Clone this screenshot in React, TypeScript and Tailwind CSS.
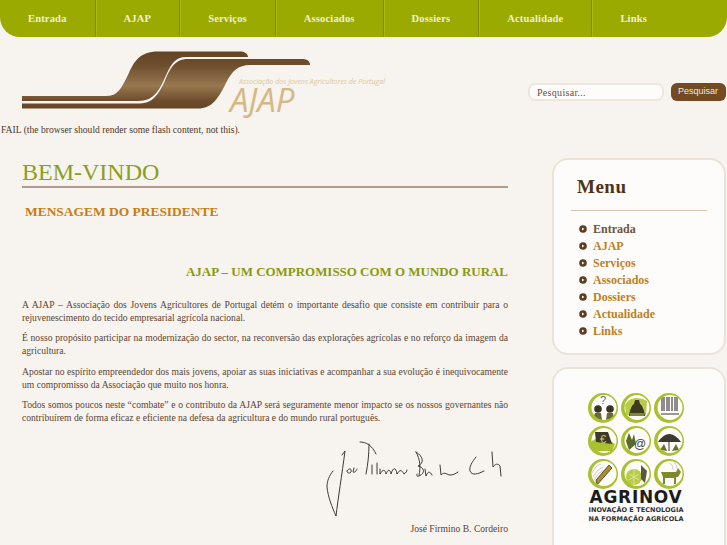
const navItems = ["Entrada", "AJAP", "Serviços", "Associados", "Dossiers", "Actualidade", "Links"];

function Logo() {
  return (
    <div className="relative h-[70px] w-[400px]">
      <svg width="320" height="70" viewBox="0 0 320 70" className="absolute left-0 top-0">
        <defs>
          <linearGradient id="band" gradientUnits="userSpaceOnUse" x1="0" y1="0" x2="0" y2="58">
            <stop offset="0" stopColor="#644426" />
            <stop offset="0.25" stopColor="#6f4e2e" />
            <stop offset="0.6" stopColor="#97784f" />
            <stop offset="0.85" stopColor="#6f4e2e" />
            <stop offset="1" stopColor="#644426" />
          </linearGradient>
        </defs>
        <path
          d="M22 45 H107 C118 45 122 36 128 24 C134 10 140 0.5 158 0.5 H240 C245 0.5 248 3 248 6 H186 C176 6 172 12 167 22 C160 38 155 50 138 50 H22 Z"
          fill="url(#band)"
        />
        <path
          d="M22 52.5 H140 C152 52.5 158 44 164 32 C170 18 174 8 188 8 H302 C307 8 310 10 310 14 H250 C238 14 232 20 226 32 C218 48 212 57.5 198 57.5 H22 Z"
          fill="url(#band)"
        />
      </svg>
      <span className="absolute left-[239px] top-[25.5px] whitespace-nowrap font-['Open_Sans',sans-serif] text-[7.1px] italic leading-[9px] text-[#dcc9a0]">
        Associação dos Jovens Agricultores de Portugal
      </span>
      <span className="absolute left-[230px] top-[34.5px] font-['Open_Sans',sans-serif] text-[33px] italic leading-[28px] text-[#d4b985]">
        AJAP
      </span>
    </div>
  );
}

function Signature() {
  return (
    <svg width="190" height="80" viewBox="18 11 190 80" fill="none" stroke="#3f3a34" strokeWidth="1" strokeLinecap="round" strokeLinejoin="round">
      <path d="M33 42 C29 47 27 52 27 58 C28 68 32 78 36 87 C38 70 42 45 45 22 L42 26" />
      <path d="M47 42 C49 39 52 39 51 43 C49 45 47 44 47 42 M54 39 L53 43 C55 44 56 42 57 40" />
      <path d="M60 13 C66 13 72 16 76 25 M69 15 C69 25 68 35 66 45" />
      <path d="M72 36 L72 45 M77 34 L77 45 M80 40 L80 45 C83 40 85 40 86 45 C88 40 90 40 91 45 C93 38 96 38 97 45 C100 40 102 41 104 45 C106 44 107 42 107 41" />
      <path d="M116 23 C120 30 121 38 119 46 M116 23 C124 28 124 34 118 37 C124 38 126 44 119 47 C117 48 116 46 117 45" />
      <path d="M125 40 L126 47 C128 42 130 42 132 46 M140 36 L141 46 C145 42 147 46 150 46 C153 46 155 45 158 43" />
      <path d="M176 28 C172 33 169 38 170 42 C172 47 178 45 184 42" />
      <path d="M192 23 L193 38 C195 35 198 34 200 37 L201 47" />
    </svg>
  );
}

function AgrinovBadge({ children }: { children?: React.ReactNode }) {
  return (
    <svg width="30" height="30" viewBox="0 0 30 30">
      {children}
      <path
        d="M15 0 A15 15 0 1 0 15 30 A15 15 0 1 0 15 0 Z M16 2 A12.5 12.5 0 1 1 16 27 A12.5 12.5 0 1 1 16 2 Z"
        fillRule="evenodd"
        fill="#a9c02f"
      />
    </svg>
  );
}

function Agrinov() {
  return (
    <div className="flex flex-col items-center">
      <div className="grid grid-cols-3 gap-[3px]">
        <AgrinovBadge>
          <circle cx="10" cy="16" r="3.8" fill="#3a3422" />
          <circle cx="22" cy="16" r="3.8" fill="#3a3422" />
          <path d="M5 26 L7 20 H13 L14 27 Z M18 27 L19 20 H25 L26 25 Z" fill="#6b6a32" />
          <text x="12" y="11" fontSize="11" fill="#666" fontFamily="Liberation Sans, sans-serif">?</text>
        </AgrinovBadge>
        <AgrinovBadge>
          <path d="M4 12 C8 4 18 3 26 8 L25 22 L5 22 Z" fill="#b9cc48" />
          <path d="M8 23 C9 16 11 12 13 11 L14 7 L18 7 L19 11 C21 12 23 16 24 23 Z" fill="#3f3a22" />
          <path d="M9 20 H23 V23 H9 Z" fill="#7d8a2a" />
        </AgrinovBadge>
        <AgrinovBadge>
          <path d="M8 4 V18 M10 4 V18 M13 4 V18 M15 4 V18 M18 4 V18 M21 4 V18 M23 4 V18" stroke="#444" strokeWidth="1.2" />
          <path d="M7 21 H25" stroke="#777" strokeWidth="1.5" />
        </AgrinovBadge>
        <AgrinovBadge>
          <path d="M3 16 C8 10 20 12 27 18 L24 25 L6 25 Z" fill="#a9c02f" />
          <path d="M7 6 H20 L24 18 L8 16 Z" fill="#3f3a22" />
          <text x="12" y="17" fontSize="11" fill="#c4d66a" fontFamily="Liberation Sans, sans-serif">€</text>
        </AgrinovBadge>
        <AgrinovBadge>
          <path d="M5 15 L8 7 L11 14 L13 8 L15 18 L8 24 Z" fill="#5a6a2a" />
          <text x="13" y="22" fontSize="12" fill="#444" fontFamily="Liberation Sans, sans-serif">@</text>
        </AgrinovBadge>
        <AgrinovBadge>
          <path d="M4 16 Q15 0 27 16 Z" fill="#3a3a30" />
          <path d="M15 15 V25" stroke="#3a3a30" strokeWidth="1" />
          <path d="M6 24 L10 18 L13 25 Z M18 25 L22 18 L25 24 Z" fill="#6a6a3a" />
        </AgrinovBadge>
        <AgrinovBadge>
          <path d="M9 26 L8 21 L21 6 L24 9 Z" fill="#a78f2c" stroke="#3f3a22" strokeWidth="0.8" />
          <path d="M4 14 Q7 7 13 5 M5 18 Q9 10 15 8 M6 21 Q10 13 16 11" fill="none" stroke="#aaa" strokeWidth="0.6" />
        </AgrinovBadge>
        <AgrinovBadge>
          <circle cx="13" cy="18" r="8" fill="#b9cc48" />
          <path d="M8 15 L18 21 M8 21 L18 15 M13 10 V26" stroke="#dfe8a8" strokeWidth="0.8" />
          <path d="M20 6 L26 12 L24 24 L20 20 Z" fill="#5a5a3a" />
        </AgrinovBadge>
        <AgrinovBadge>
          <path d="M7 13 L22 13 L24 9 L27 13 L24 18 L22 18 L22 25 L20 25 L20 19 L11 19 L11 25 L9 25 L9 18 Z" fill="#7c8a2c" />
          <path d="M16 4 Q20 7 19 11 M20 3 Q24 7 23 10" fill="none" stroke="#aaa" strokeWidth="0.6" />
        </AgrinovBadge>
      </div>
      <p className="font-['DejaVu_Sans',sans-serif] text-[17px] font-bold leading-[16px] tracking-[0.7px] text-[#1c1c1c]">AGRINOV</p>
      <p className="mt-[1px] whitespace-nowrap text-center font-['DejaVu_Sans',sans-serif] text-[6.5px] font-bold leading-[9px] tracking-[0.05px] text-[#333]">
        INOVAÇÃO E TECNOLOGIA
        <br />
        NA FORMAÇÃO AGRÍCOLA
      </p>
    </div>
  );
}

export default function App() {
  return (
    <div className="h-[545px] w-[727px] overflow-hidden bg-[#f7f3ee] font-['Liberation_Serif',serif] text-[#5b4533]">
      <nav className="flex h-[37px] rounded-b-[20px] bg-[#9aaa00]">
        {navItems.map((item, index) => (
          <a
            key={item}
            className={`flex items-center px-7 text-[10.56px] font-bold tracking-[0.15px] text-[#f4efcf] ${
              index < navItems.length - 1 ? "border-r border-[#7f8f00] shadow-[1px_0_0_#a8b71a]" : ""
            }`}
          >
            {item}
          </a>
        ))}
      </nav>

      <header className="flex h-[80px] items-start justify-between pt-[14px]">
        <Logo />
        <form className="mt-[32px] mr-[1.5px] flex items-center gap-[6.5px]">
          <input
            readOnly
            value="Pesquisar..."
            className="h-[18px] w-[136px] rounded-[7px] border-2 border-[#eee6db] bg-[#fdfcfa] px-[7px] font-['Liberation_Serif',serif] text-[10px] tracking-[0.3px] text-[#6b4f35] outline-none"
          />
          <button type="button" className="h-[18px] w-[55px] rounded-[6px] bg-[#744a22] font-['Liberation_Sans',sans-serif] text-[9px] text-[#f0e8dc]">
            Pesquisar
          </button>
        </form>
      </header>

      <p className="pl-[1px] pt-[6px] text-[9.6px] leading-[13px] text-[#4a3a2c]">FAIL (the browser should render some flash content, not this).</p>

      <div className="flex items-start pt-[22px]">
        <main className="ml-[22px] w-[486px]">
          <h1 className="border-b-2 border-[#ad9c88] text-[24px] leading-[28px] text-[#8a9f1c]">BEM-VINDO</h1>
          <h2 className="mt-[15px] pl-[3px] text-[13.44px] font-bold leading-[18px] text-[#c67d14]">MENSAGEM DO PRESIDENTE</h2>
          <h3 className="mt-[41.5px] text-right text-[12.96px] font-bold leading-[17px] text-[#8a9a10]">AJAP – UM COMPROMISSO COM O MUNDO RURAL</h3>
          <div className="mt-[18px] space-y-[7.5px] text-justify text-[9.6px] leading-[13px]">
            <p>A AJAP – Associação dos Jovens Agricultores de Portugal detém o importante desafio que consiste em contribuir para o rejuvenescimento do tecido empresarial agrícola nacional.</p>
            <p>É nosso propósito participar na modernização do sector, na reconversão das explorações agrícolas e no reforço da imagem da agricultura.</p>
            <p>Apostar no espírito empreendedor dos mais jovens, apoiar as suas iniciativas e acompanhar a sua evolução é inequivocamente um compromisso da Associação que muito nos honra.</p>
            <p>Todos somos poucos neste “combate” e o contributo da AJAP será seguramente menor impacto se os nossos governantes não contribuírem de forma eficaz e eficiente na defesa da agricultura e do mundo rural português.</p>
          </div>
          <div className="mt-[16px] flex justify-end">
            <Signature />
          </div>
          <p className="mt-[1.5px] text-right text-[9.6px] leading-[13px]">José Firmino B. Cordeiro</p>
        </main>

        <aside className="ml-[44px] w-[174px] shrink-0 space-y-[12px]">
          <section className="h-[197px] rounded-[16px] border-2 border-[#ebe3d8] bg-[#fdfcfa] pt-[14px]">
            <h4 className="pl-[23px] text-[19px] font-bold leading-[26px] tracking-[0.5px] text-[#4f3318]">Menu</h4>
            <div className="mx-[17px] mt-[10px] border-b border-[#d6c6ae]" />
            <ul className="mt-[9px] pl-[25px]">
              {navItems.map((item, index) => (
                <li key={item} className="flex h-[17px] items-center gap-[6px] text-[12px] font-bold">
                  <svg width="8" height="8" viewBox="0 0 8 8" className="shrink-0">
                    <circle cx="4" cy="4" r="3.8" fill="#5b3d20" />
                    <path d="M3 2.4 L5.4 4 L3 5.6 Z" fill="#fdfcfa" />
                  </svg>
                  <span className={index === 0 ? "text-[#6a5545]" : "text-[#c07f1e]"}>{item}</span>
                </li>
              ))}
            </ul>
          </section>
          <section className="flex h-[220px] justify-center rounded-[16px] border-2 border-[#ebe3d8] bg-[#fdfcfa] pr-[6px] pt-[24px]">
            <Agrinov />
          </section>
        </aside>
      </div>
    </div>
  );
}
